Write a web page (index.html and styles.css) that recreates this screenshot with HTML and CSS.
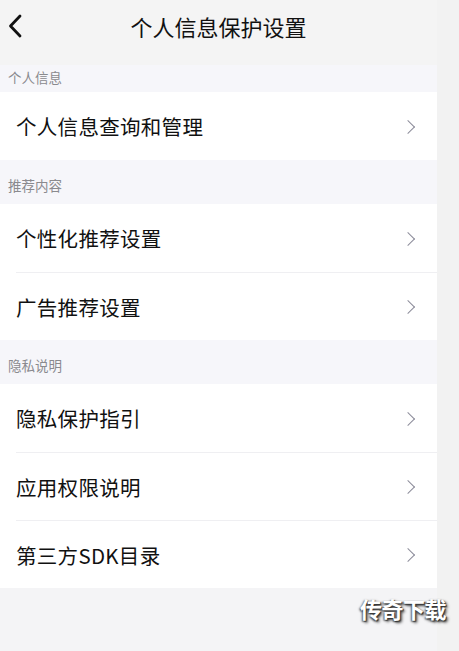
FILE: index.html
```html
<!DOCTYPE html>
<html lang="zh">
<head>
  <meta charset="UTF-8">
  <meta name="viewport" content="width=device-width, initial-scale=1.0">
  <title>个人信息保护设置</title>
  <link rel="stylesheet" href="styles.css">
</head>
<body>
  <div class="page">
    <div class="main">
      <div class="header">
        <a class="back" href="#">
          <svg width="14" height="24" viewBox="0 0 14 24">
            <path d="M12 2 L2.5 12 L12 22" fill="none" stroke="#111" stroke-width="2.8" stroke-linecap="round" stroke-linejoin="round"/>
          </svg>
        </a>
        <h1 class="title">个人信息保护设置</h1>
        <span></span>
      </div>

      <div class="section first">个人信息</div>
      <div class="group">
        <a class="row" href="#"><span>个人信息查询和管理</span><i class="arrow"></i></a>
      </div>

      <div class="section">推荐内容</div>
      <div class="group">
        <a class="row" href="#"><span>个性化推荐设置</span><i class="arrow"></i></a>
        <a class="row" href="#"><span>广告推荐设置</span><i class="arrow"></i></a>
      </div>

      <div class="section">隐私说明</div>
      <div class="group">
        <a class="row" href="#"><span>隐私保护指引</span><i class="arrow"></i></a>
        <a class="row" href="#"><span>应用权限说明</span><i class="arrow"></i></a>
        <a class="row" href="#"><span>第三方SDK目录</span><i class="arrow"></i></a>
      </div>
    </div>
    <div class="side"></div>
    <div class="watermark">传奇下载</div>
  </div>
</body>
</html>
```

FILE: styles.css
```css
body {
  margin: 0;
  background: #f2f2f2;
  font-family: "Noto Sans CJK SC", "Noto Sans", sans-serif;
}

.page {
  display: flex;
  min-height: 651px;
  position: relative;
}

.main {
  width: 437px;
  background: #f4f4f6;
}

.side {
  flex: 1;
  background: #f2f2f2;
}

.header {
  height: 65px;
  display: grid;
  grid-template-columns: 1fr auto 1fr;
  align-items: center;
  padding-bottom: 14px;
  box-sizing: border-box;
  background: #f4f4f4;
}

.back {
  display: flex;
  padding-left: 8px;
}

.title {
  margin: 0;
  font-size: 22px;
  font-weight: 400;
  color: #111;
}

.section {
  height: 44px;
  box-sizing: border-box;
  padding: 12px 0 0 8px;
  line-height: 27px;
  font-size: 13.5px;
  color: #8a8a8e;
  background: #f6f6fa;
}

.section.first {
  height: 27px;
  padding-top: 0;
  line-height: 24px;
}

.group {
  background: #fff;
}

.row {
  height: 68px;
  display: flex;
  align-items: center;
  justify-content: space-between;
  margin-left: 16px;
  padding-right: 24px;
  border-top: 1px solid #efeff2;
  box-sizing: border-box;
  font-size: 20.5px;
  color: #111;
  text-decoration: none;
}

.row:first-child {
  border-top: none;
}

.row span {
  letter-spacing: 0.3px;
}

.arrow {
  width: 9px;
  height: 9px;
  border-top: 1.6px solid #8c8c9a;
  border-right: 1.6px solid #8c8c9a;
  transform: rotate(45deg);
  margin-top: 1px;
}

.watermark {
  position: absolute;
  left: 360px;
  top: 592px;
  font-size: 22px;
  font-weight: 700;
  color: #fff;
  letter-spacing: -0.5px;
  text-shadow: 1px 1px 1px #333, -1px 1px 2px #555, 2px 2px 3px #444;
}
```
